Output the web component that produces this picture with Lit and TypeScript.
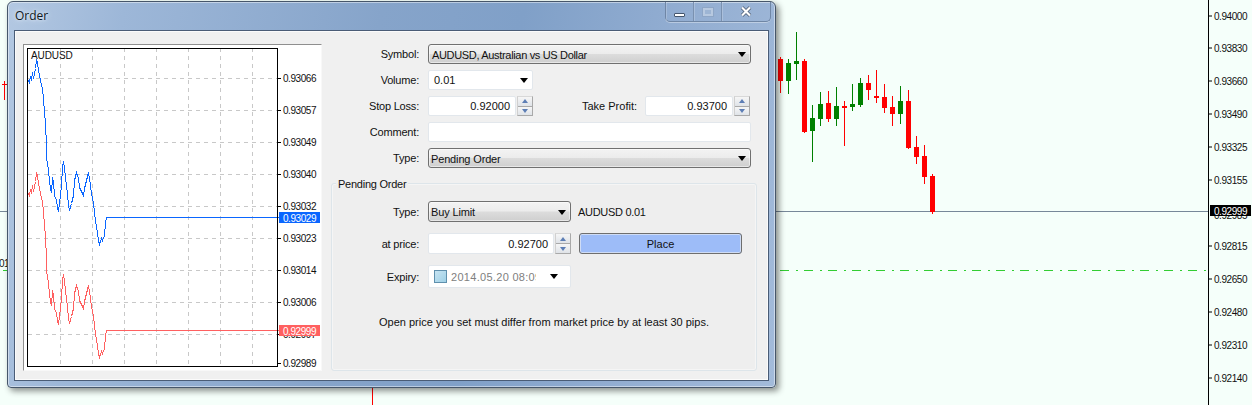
import { LitElement, html, css, svg } from "lit";
import { customElement } from "lit/decorators.js";

const candles: [number, number, number, number, number, number][] = [
  [31,171,279,177,243,0],[55,177,282,189,243,1],[79,96,240,183,192,1],[103,177,399,183,396,0],
  [127,315,486,354,393,1],[151,276,378,312,357,1],[175,273,366,309,357,0],[199,261,378,318,357,1],
  [223,303,438,318,324,0],[247,252,333,312,321,1],[271,234,321,249,315,1],[295,225,300,249,270,0],
  [319,210,309,288,294,0],[343,252,339,291,324,0],[367,288,378,321,342,0],[391,258,372,303,342,1],
  [415,270,447,303,444,0],[439,408,492,441,471,0],[463,435,552,468,531,0],[487,522,642,528,636,0],
];
const axis: [string, number][] = [
  ["0.94000",16],["0.93830",48],["0.93660",81],["0.93490",114],["0.93325",147],["0.93155",180],
  ["0.92815",246],["0.92650",279],["0.92480",312],["0.92310",345],["0.92140",378],
];
const blue: [number, number][] = [
  [28,80],[29,82],[30,76],[31,80],[32,72],[33,78],[35,68],[36,60],[37,62],[38,70],[40,80],[42,88],[43,98],[44,112],[45,123],
  [46,145],[46.5,160],[48,170],[49,180],[50,188],[51,192],[52,177],[53,182],[54,195],[56,200],[57,207],[58,211],[59,203],
  [61,185],[62,167],[63,161],[64,167],[65,178],[67,193],[68,205],[69,210],[71,203],[73,195],[74,180],[76,172],[78,178],
  [79,187],[83,195],[84,188],[86,180],[88,172],[89,178],[91,193],[93,203],[94,212],[95,220],[97,233],[98,240],[99,244],
  [101,238],[102,240],[104,235],[105,222],[106,217],[279,217],
];
const pts = (dy: number) => blue.map(([x, y]) => `${x + 0.5},${y + dy + 0.5}`).join(" ");
const miniLabels: [string, number][] = [
  ["0.93066",78],["0.93057",110],["0.93049",142],["0.93040",174],["0.93032",206],["0.93023",238],
  ["0.93014",270],["0.93006",302],["0.92997",334],["0.92989",363],
];

@customElement("app-root")
export class AppRoot extends LitElement {
  static styles = css`
    :host { display: block; position: relative; width: 1252px; height: 405px; overflow: hidden; background: #f5fffa;
      font: 11px "Liberation Sans", Arial, sans-serif; color: #111; }
    .bg { position: absolute; inset: 0; }
    .axis-text { font: 10px "Liberation Sans", sans-serif; letter-spacing: -0.45px; fill: #111; }
    .axis-white { fill: #fff; }
    .sym { letter-spacing: -0.1px; }
    .step { shape-rendering: crispEdges; }
    .window { position: absolute; left: 7px; top: 1px; width: 769px; height: 387px; box-sizing: border-box;
      display: flex; flex-direction: column; border: 1px solid #46566a; border-radius: 6px 6px 4px 4px;
      background: linear-gradient(100deg, #b3c8e2 0%, #9db7d8 14%, #86a4ca 45%, #80a0c8 62%, #93aed2 82%, #a3bbda 100%);
      box-shadow: 3px 3px 6px rgba(0,0,0,.45), inset 0 0 0 1px rgba(255,255,255,.45); }
    .titlebar { height: 28px; flex: none; display: flex; align-items: flex-start; padding: 0 4px 0 7px; }
    .title { font: 12px "Open Sans", "Liberation Sans", sans-serif; color: #101820; margin-top: 5px; text-shadow: 0 0 6px #dfe9f5, 0 0 3px #dfe9f5; }
    .ctrls { margin-left: auto; display: flex; height: 20px; box-sizing: border-box; border: 1px solid #6f86a5; border-top: 0;
      border-radius: 0 0 5px 5px; box-shadow: 0 1px 0 rgba(255,255,255,.35); }
    .ctrl { display: flex; align-items: center; justify-content: center; border-right: 1px solid #7a91b0; box-shadow: inset 1px 0 0 rgba(255,255,255,.2); }
    .ctrl:last-child { border-right: 0; }
    .c-min { width: 27px; } .c-max { width: 27px; } .c-close { width: 48px; }
    .min-i { width: 11px; height: 4px; margin-top: 6px; background: #fff; border: 1px solid #44556c; box-sizing: border-box; border-radius: 1px; }
    .max-i { width: 10px; height: 8px; border: 2px solid #b7c9e0; background: #9db5d4; box-sizing: border-box; outline: 1px solid #8ea6c6; }
    .client { flex: 1; margin: 0 6px 6px; box-sizing: border-box; border: 1px solid #4a5c76; outline: 0;
      background: #f0f0f0; display: flex; padding: 13px 0 0 8px; box-shadow: inset 0 0 0 1px #fbfbfb; }
    .panel { flex: none; width: 299px; height: 327px; box-sizing: border-box; background: #fff;
      border-style: solid; border-width: 1px; border-color: #8f8f8f #f8f8f8 #f8f8f8 #8f8f8f; overflow: hidden; }
    .panel svg { display: block; margin: -1px 0 0 -1px; }
    .form { margin-left: 9px; width: 426px; display: flex; flex-direction: column; }
    .top { display: grid; grid-template-columns: 88px 323px; column-gap: 9px; row-gap: 6px; grid-auto-rows: 20px; align-items: stretch; }
    .lbl { display: flex; align-items: center; justify-content: flex-end; white-space: nowrap; letter-spacing: -0.2px; }
    .combo { display: flex; align-items: center; box-sizing: border-box; border: 1px solid #707070; border-radius: 3px; padding: 1px 4px 0 2px; letter-spacing: -0.15px;
      background: linear-gradient(#f3f3f3 0%, #ececec 48%, #dcdcdc 52%, #cfcfcf 100%); box-shadow: inset 0 0 0 1px rgba(255,255,255,.5); }
    .narrow { letter-spacing: -0.33px; padding-left: 3px; }
    .arrow { margin-left: auto; flex: none; width: 0; height: 0; border: 4px solid transparent; border-top: 5px solid #000; border-bottom: 0; }
    .field { display: flex; align-items: center; box-sizing: border-box; background: #fff; border: 1px solid #e2e7ec; border-radius: 2px; }
    .vol { width: 105px; padding: 0 4px 0 5px; }
    .num { justify-content: flex-end; padding-right: 5px; }
    .pair { display: flex; align-items: stretch; }
    .w88 { width: 88px; }
    .spin { flex: none; width: 16px; display: flex; flex-direction: column; box-sizing: border-box; border: 1px solid #a9a9a9; border-left-color: #d0d0d0; border-top-color: #d8d8d8; margin-left: 1px; background: #f4f4f4; }
    .spin b { flex: 1; display: flex; align-items: center; justify-content: center; background: linear-gradient(#f6f6f6, #dfe3e8); }
    .spin b + b { border-top: 1px solid #a9a9a9; }
    .up { width: 0; height: 0; border: 3.5px solid transparent; border-bottom: 4px solid #5d7eb5; border-top: 0; }
    .dn { width: 0; height: 0; border: 3.5px solid transparent; border-top: 4px solid #5d7eb5; border-bottom: 0; }
    .tp { display: flex; align-items: stretch; }
    .tp .lbl { margin-left: auto; margin-right: 8px; letter-spacing: 0; }
    .tp-end { width: 1px; }
    .group { position: relative; margin-top: 15px; height: 188px; box-sizing: border-box; border: 1px solid #dde5ea; border-radius: 3px; box-shadow: inset 0 0 0 1px #f5f5f5; padding: 17px 0 0; background: #eeeeee; }
    .legend { position: absolute; left: 4px; top: -6px; padding: 0 2px; letter-spacing: -0.25px; background: linear-gradient(#f0f0f0 40%, #eeeeee 40%); }
    .g-grid { display: grid; grid-template-columns: 87px 143px auto; column-gap: 9px; grid-template-rows: 21px 21px 23px; row-gap: 11px; }
    .g-grid > .third { margin-left: -2px; display: flex; align-items: center; }
    .g-grid > .sym2 { letter-spacing: -0.3px; }
    .g-grid > .third.pl { margin-left: -1px; }
    .place { width: 163px; height: 21px; box-sizing: border-box; display: flex; align-items: center; justify-content: center; border: 1px solid #6e6e6e; border-radius: 3px; background: #9dbcf8; box-shadow: inset 0 0 0 1px #cfdcf5; }
    .exp { padding: 0 12px 0 5px; }
    .check { flex: none; width: 13px; height: 13px; box-sizing: border-box; border: 1px solid #5f90ad; background: linear-gradient(135deg, #c7e4f2, #9ed0e6); margin-right: 4px; }
    .date { width: 85px; overflow: hidden; white-space: nowrap; color: #808080; letter-spacing: 0.3px; }
    .note { margin-top: 28px; text-align: center; }
  `;

  render() {
    return html`
      <svg class="bg" width="1252" height="405" viewBox="0 0 1252 405">
        <line x1="0" x2="1208" y1="211.5" y2="211.5" stroke="#778899" />
        <line x1="780" x2="1206" y1="270.5" y2="270.5" stroke="#32cd32" stroke-dasharray="9 7 2 6" />
        <rect x="1208" y="0" width="1" height="405" fill="#000" />
        <path d="M4.5 81V100M2 84.5H7M372.5 388V405" stroke="#f00" fill="none" />
        <path d="M3 270.5H7" stroke="#32cd32" />
        <text x="-1" y="267" class="axis-text">01</text>
        ${candles.map(([zx, wt, wb, bt, bb, g]) => {
          const x = 770 + Math.floor(zx / 3);
          const c = g ? "#008000" : "#ff0000";
          return svg`<rect x=${x} y=${wt / 3} width="1" height=${(wb - wt) / 3} fill=${c} />
            <rect x=${x - 2} y=${bt / 3} width="5" height=${(bb - bt) / 3} fill=${c} />`;
        })}
        ${axis.map(([t, y]) => svg`<rect x="1209" y=${y - 0.5} width="3" height="1" fill="#000" />
          <text x="1214" y=${y + 4} class="axis-text">${t}</text>`)}
        <text x="1214" y="219" class="axis-text">0.92985</text>
        <rect x="1210" y="205" width="41" height="11" fill="#000" />
        <text x="1214" y="215" class="axis-text axis-white">0.92999</text>
      </svg>

      <div class="window">
        <div class="titlebar">
          <span class="title">Order</span>
          <div class="ctrls">
            <div class="ctrl c-min"><i class="min-i"></i></div>
            <div class="ctrl c-max"><i class="max-i"></i></div>
            <div class="ctrl c-close">
              <svg width="12" height="11" viewBox="0 0 12 11"><path d="M2 1.5L10 9.5M10 1.5L2 9.5" stroke="#44556c" stroke-width="3.6" fill="none"/><path d="M2 1.5L10 9.5M10 1.5L2 9.5" stroke="#fff" stroke-width="2.2" fill="none"/></svg>
            </div>
          </div>
        </div>
        <div class="client">
          <div class="panel">
            <svg width="299" height="327" viewBox="23 44 299 327">
              <g stroke="#c8c8c8" stroke-dasharray="4 4" fill="none">
                ${[60.5,92.5,124.5,156.5,188.5,220.5,252.5].map((x) => svg`<line x1=${x} x2=${x} y1="48" y2="366" />`)}
                ${[78.5,110.5,142.5,174.5,206.5,238.5,270.5,302.5,334.5].map((y) => svg`<line x1="28" x2="278" y1=${y} y2=${y} />`)}
              </g>
              <polyline class="step" points=${pts(0)} fill="none" stroke="#0a66ff" stroke-width="1" />
              <polyline class="step" points=${pts(113)} fill="none" stroke="#ff6060" stroke-width="1" />
              <rect x="27.5" y="48.5" width="250" height="318" fill="none" stroke="#000" />
              ${miniLabels.map(([t, y]) => svg`<rect x="278" y=${y} width="3" height="1" fill="#000" />
                <text x="283" y=${y + 4} class="axis-text">${t}</text>`)}
              <text x="31" y="59" class="axis-text sym">AUDUSD</text>
              <rect x="279" y="212" width="41" height="11" fill="#0a66ff" />
              <text x="283" y="221.5" class="axis-text axis-white">0.93029</text>
              <rect x="279" y="325" width="41" height="11" fill="#ff6060" />
              <text x="283" y="334.5" class="axis-text axis-white">0.92999</text>
            </svg>
          </div>
          <div class="form">
            <div class="top">
              <span class="lbl">Symbol:</span>
              <div class="combo narrow">AUDUSD, Australian vs US Dollar<i class="arrow"></i></div>
              <span class="lbl">Volume:</span>
              <div class="field vol">0.01<i class="arrow"></i></div>
              <span class="lbl">Stop Loss:</span>
              <div class="tp">
                <div class="pair">
                  <div class="field num w88">0.92000</div>
                  <div class="spin"><b><i class="up"></i></b><b><i class="dn"></i></b></div>
                </div>
                <span class="lbl">Take Profit:</span>
                <div class="pair">
                  <div class="field num w88">0.93700</div>
                  <div class="spin"><b><i class="up"></i></b><b><i class="dn"></i></b></div>
                </div>
                <span class="tp-end"></span>
              </div>
              <span class="lbl">Comment:</span>
              <div class="field"></div>
              <span class="lbl">Type:</span>
              <div class="combo">Pending Order<i class="arrow"></i></div>
            </div>
            <div class="group">
              <span class="legend">Pending Order</span>
              <div class="g-grid">
                <span class="lbl">Type:</span>
                <div class="combo">Buy Limit<i class="arrow"></i></div>
                <span class="third sym2">AUDUSD 0.01</span>
                <span class="lbl">at price:</span>
                <div class="pair">
                  <div class="field num" style="flex:1">0.92700</div>
                  <div class="spin"><b><i class="up"></i></b><b><i class="dn"></i></b></div>
                </div>
                <div class="third pl"><div class="place">Place</div></div>
                <span class="lbl">Expiry:</span>
                <div class="field exp"><i class="check"></i><span class="date">2014.05.20 08:09</span><i class="arrow"></i></div>
              </div>
              <div class="note">Open price you set must differ from market price by at least 30 pips.</div>
            </div>
          </div>
        </div>
      </div>
    `;
  }
}
